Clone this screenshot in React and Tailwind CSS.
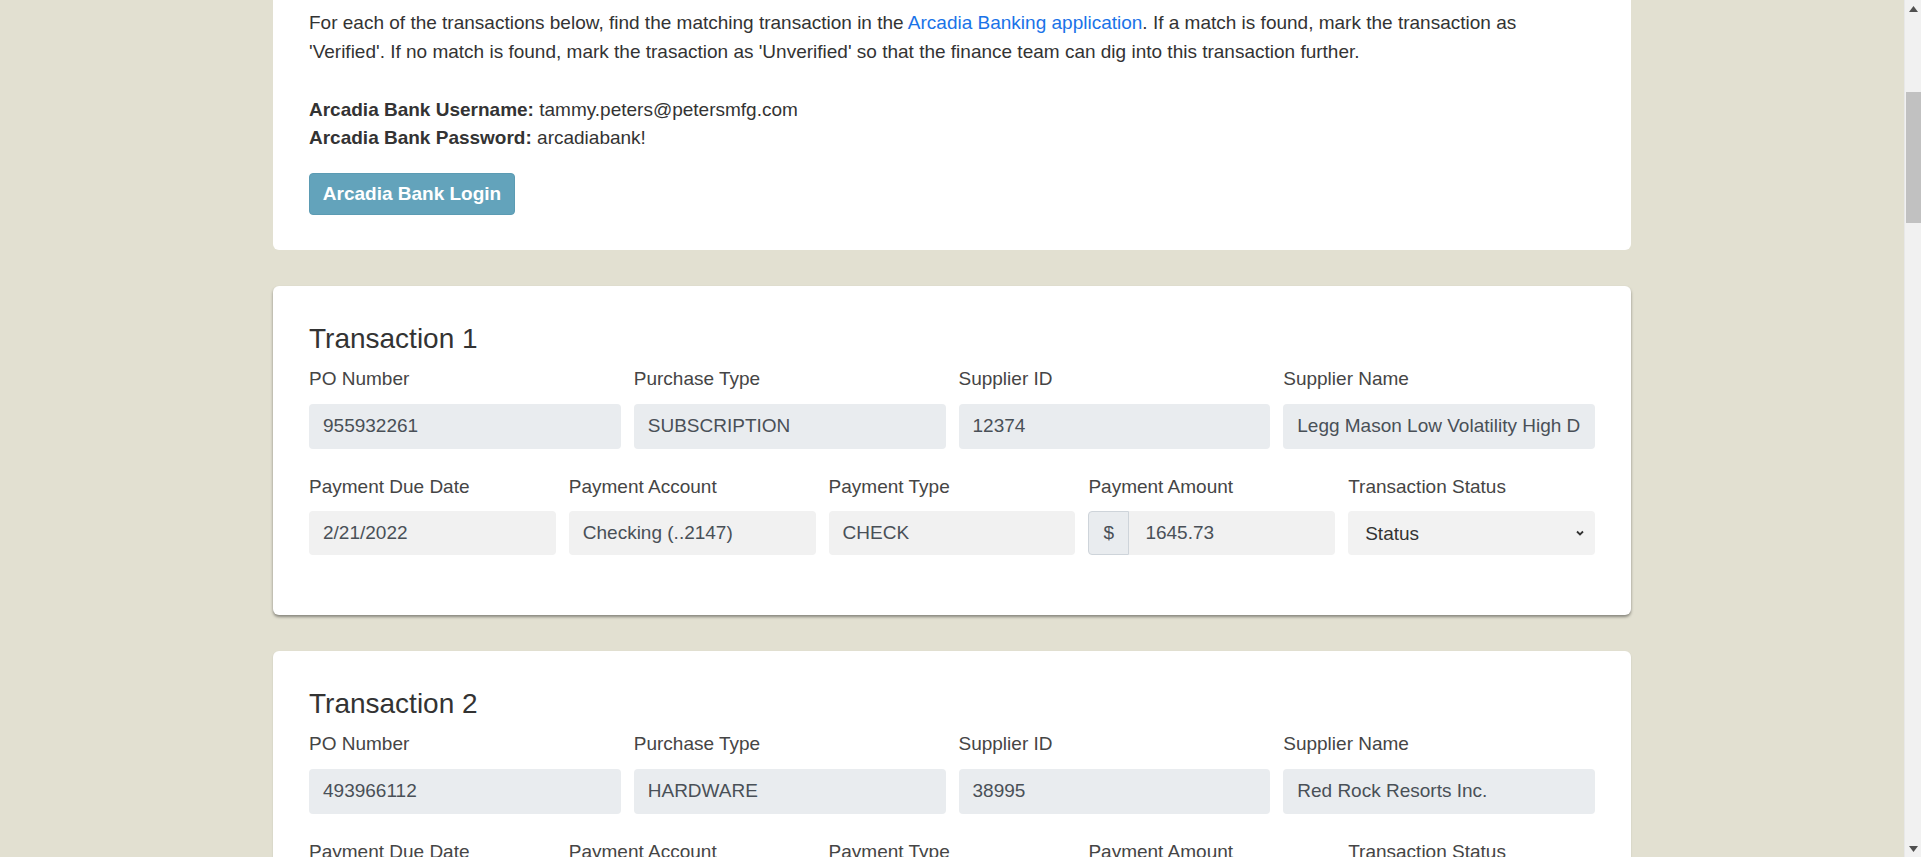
import React from "react";

const transactions = [
  {
    id: 1,
    po: "955932261",
    purchaseType: "SUBSCRIPTION",
    supplierId: "12374",
    supplierName: "Legg Mason Low Volatility High D",
    dueDate: "2/21/2022",
    account: "Checking (..2147)",
    paymentType: "CHECK",
    amount: "1645.73",
    raised: true,
  },
  {
    id: 2,
    po: "493966112",
    purchaseType: "HARDWARE",
    supplierId: "38995",
    supplierName: "Red Rock Resorts Inc.",
    dueDate: "3/04/2022",
    account: "Savings (..8821)",
    paymentType: "ACH",
    amount: "872.10",
    raised: false,
  },
];

const Field = ({ label, value, light }) => (
  <div className="flex flex-col min-w-0">
    <label className="text-[19px] leading-[28.8px] text-[#454545] mb-[10px]">{label}</label>
    <div
      className={
        light
          ? "h-[44px] rounded-[4px] bg-[#f1f1f1] px-[14px] flex items-center text-[19px] text-[#495057] whitespace-nowrap overflow-hidden"
          : "h-[45px] rounded-[4px] bg-[#e9ecef] px-[14px] flex items-center text-[19px] text-[#495057] whitespace-nowrap overflow-hidden"
      }
    >
      {value}
    </div>
  </div>
);

const TransactionCard = ({ t }) => (
  <div
    className={
      t.raised
        ? "bg-white rounded-[6px] px-[36px] pt-[36px] pb-[36px] shadow-[0_2px_3px_rgba(0,0,0,0.4)]"
        : "bg-white rounded-[6px] px-[36px] pt-[36px] pb-[36px] shadow-[0_1px_2px_rgba(0,0,0,0.12)]"
    }
  >
    <h3 className="text-[28px] leading-[1.2] text-[#333] mb-[9px]">Transaction {t.id}</h3>
    <div className="grid grid-cols-4 gap-x-[13px] mb-[24px]">
      <Field label="PO Number" value={t.po} />
      <Field label="Purchase Type" value={t.purchaseType} />
      <Field label="Supplier ID" value={t.supplierId} />
      <Field label="Supplier Name" value={t.supplierName} />
    </div>
    <div className="grid grid-cols-5 gap-x-[13px] mb-[24px]">
      <Field label="Payment Due Date" value={t.dueDate} light />
      <Field label="Payment Account" value={t.account} light />
      <Field label="Payment Type" value={t.paymentType} light />
      <div className="flex flex-col min-w-0">
        <label className="text-[19px] leading-[28.8px] text-[#454545] mb-[10px]">Payment Amount</label>
        <div className="flex h-[44px]">
          <div className="w-[41px] rounded-l-[4px] border border-[#ced4da] bg-[#e9ecef] flex items-center justify-center text-[19px] text-[#495057]">
            $
          </div>
          <div className="flex-1 rounded-r-[4px] bg-[#f1f1f1] pl-[16px] flex items-center text-[19px] text-[#495057]">
            {t.amount}
          </div>
        </div>
      </div>
      <div className="flex flex-col min-w-0">
        <label className="text-[19px] leading-[28.8px] text-[#454545] mb-[10px]">Transaction Status</label>
        <div className="h-[44px] rounded-[4px] bg-[#f2f2f2] pl-[17px] pr-[10px] flex items-center justify-between text-[19px] text-[#333]">
          <span className="pt-[2px]">Status</span>
          <svg width="10" height="10" viewBox="0 0 10 10">
            <path d="M2 3.5 L5 6.5 L8 3.5" fill="none" stroke="#333" strokeWidth="1.8" />
          </svg>
        </div>
      </div>
    </div>
  </div>
);

const Scrollbar = () => (
  <div className="w-[17px] h-full bg-[#f1f1f1] border-l border-[#e8e8e8] flex flex-col items-center">
    <div className="h-[17px] flex items-center justify-center">
      <svg width="9" height="6" viewBox="0 0 9 6">
        <path d="M0 6 L4.5 0 L9 6 Z" fill="#505050" />
      </svg>
    </div>
    <div className="h-[75px]" />
    <div className="w-[15px] h-[131px] bg-[#c1c1c1]" />
    <div className="flex-1" />
    <div className="h-[17px] flex items-center justify-center">
      <svg width="9" height="6" viewBox="0 0 9 6">
        <path d="M0 0 L9 0 L4.5 6 Z" fill="#505050" />
      </svg>
    </div>
  </div>
);

export default function App() {
  return (
    <div
      className="h-[857px] w-full overflow-hidden flex bg-[#e2e0d1]"
      style={{ fontFamily: '"Liberation Sans", Arial, sans-serif' }}
    >
      <div className="flex-1 overflow-hidden">
        <div className="w-[1358px] mx-auto flex flex-col gap-[36px]">
          <div className="bg-white rounded-b-[6px] px-[36px] pt-[9px] pb-[35px] text-[19px] leading-[28.8px] text-[#333]">
            <p className="mb-[29px]">
              For each of the transactions below, find the matching transaction in the{" "}
              <a href="#" className="text-[#1a73e8]">Arcadia Banking application</a>. If a match is found, mark the transaction as
              <br />
              'Verified'. If no match is found, mark the trasaction as 'Unverified' so that the finance team can dig into this transaction further.
            </p>
            <p>
              <b>Arcadia Bank Username:</b> tammy.peters@petersmfg.com
            </p>
            <p>
              <b>Arcadia Bank Password:</b> arcadiabank!
            </p>
            <button className="mt-[20px] h-[42px] w-[206px] rounded-[4px] bg-[#63a3bb] border border-[#5b9bb3] text-white font-bold text-[19px] flex items-center justify-center">
              Arcadia Bank Login
            </button>
          </div>
          {transactions.map((t) => (
            <TransactionCard key={t.id} t={t} />
          ))}
        </div>
      </div>
      <Scrollbar />
    </div>
  );
}
